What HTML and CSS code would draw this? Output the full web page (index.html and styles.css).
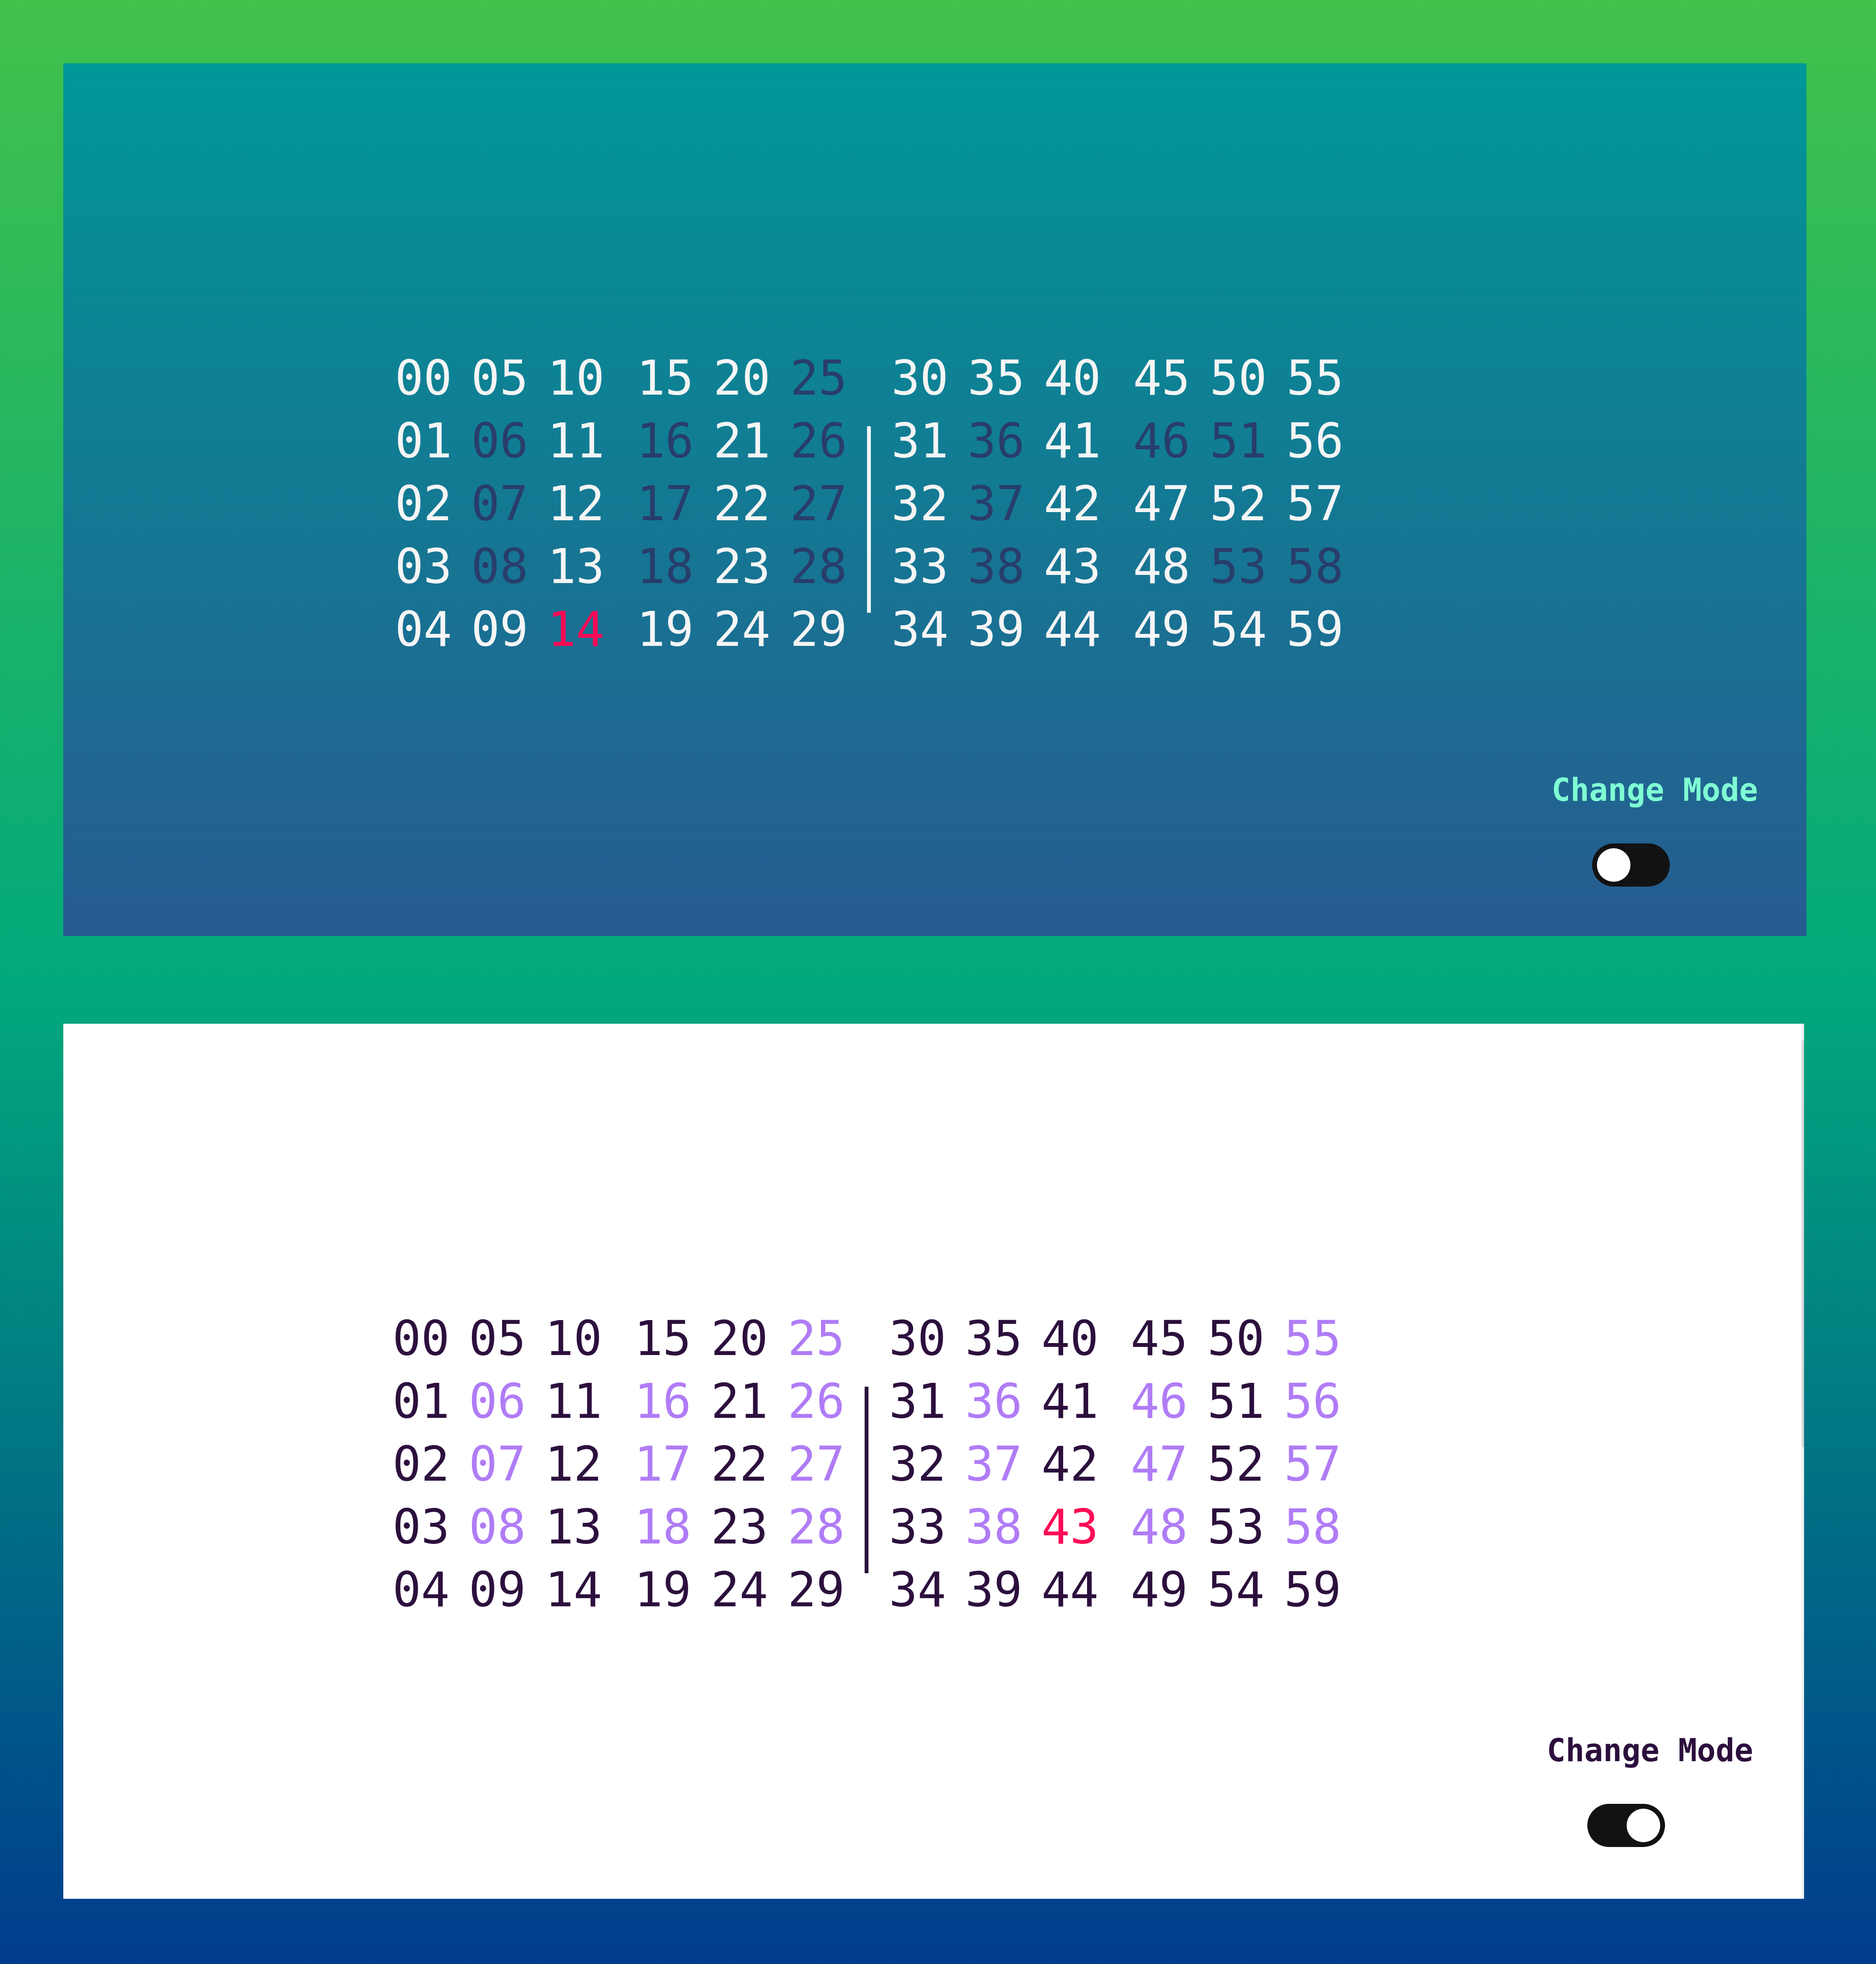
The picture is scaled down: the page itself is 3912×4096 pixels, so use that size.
FILE: index.html
```html
<!DOCTYPE html>
<html lang="en">
<head>
    <meta charset="UTF-8">
    <meta name="viewport" content="width=device-width, initial-scale=1.0">
    <title>Binary Minute Clock</title>
    <link rel="stylesheet" href="styles.css">
</head>
<body>
    <div class="panel dark">
        <div class="clock">
            <div class="half">
                <span class="n">00</span><span class="n">01</span><span class="n">02</span><span class="n">03</span><span class="n">04</span>
                <span class="n">05</span><span class="n dim">06</span><span class="n dim">07</span><span class="n dim">08</span><span class="n">09</span>
                <span class="n">10</span><span class="n">11</span><span class="n">12</span><span class="n">13</span><span class="n hot">14</span>
                <span class="n">15</span><span class="n dim">16</span><span class="n dim">17</span><span class="n dim">18</span><span class="n">19</span>
                <span class="n">20</span><span class="n">21</span><span class="n">22</span><span class="n">23</span><span class="n">24</span>
                <span class="n dim">25</span><span class="n dim">26</span><span class="n dim">27</span><span class="n dim">28</span><span class="n">29</span>
            </div>
            <div class="divider"></div>
            <div class="half">
                <span class="n">30</span><span class="n">31</span><span class="n">32</span><span class="n">33</span><span class="n">34</span>
                <span class="n">35</span><span class="n dim">36</span><span class="n dim">37</span><span class="n dim">38</span><span class="n">39</span>
                <span class="n">40</span><span class="n">41</span><span class="n">42</span><span class="n">43</span><span class="n">44</span>
                <span class="n">45</span><span class="n dim">46</span><span class="n">47</span><span class="n">48</span><span class="n">49</span>
                <span class="n">50</span><span class="n dim">51</span><span class="n">52</span><span class="n dim">53</span><span class="n">54</span>
                <span class="n">55</span><span class="n">56</span><span class="n">57</span><span class="n dim">58</span><span class="n">59</span>
            </div>
        </div>
        <div class="mode">
            <span class="mode-label">Change Mode</span>
            <label class="switch"><input type="checkbox"><span class="knob"></span></label>
        </div>
    </div>

    <div class="panel light">
        <div class="clock">
            <div class="half">
                <span class="n">00</span><span class="n">01</span><span class="n">02</span><span class="n">03</span><span class="n">04</span>
                <span class="n">05</span><span class="n dim">06</span><span class="n dim">07</span><span class="n dim">08</span><span class="n">09</span>
                <span class="n">10</span><span class="n">11</span><span class="n">12</span><span class="n">13</span><span class="n">14</span>
                <span class="n">15</span><span class="n dim">16</span><span class="n dim">17</span><span class="n dim">18</span><span class="n">19</span>
                <span class="n">20</span><span class="n">21</span><span class="n">22</span><span class="n">23</span><span class="n">24</span>
                <span class="n dim">25</span><span class="n dim">26</span><span class="n dim">27</span><span class="n dim">28</span><span class="n">29</span>
            </div>
            <div class="divider"></div>
            <div class="half">
                <span class="n">30</span><span class="n">31</span><span class="n">32</span><span class="n">33</span><span class="n">34</span>
                <span class="n">35</span><span class="n dim">36</span><span class="n dim">37</span><span class="n dim">38</span><span class="n">39</span>
                <span class="n">40</span><span class="n">41</span><span class="n">42</span><span class="n hot">43</span><span class="n">44</span>
                <span class="n">45</span><span class="n dim">46</span><span class="n dim">47</span><span class="n dim">48</span><span class="n">49</span>
                <span class="n">50</span><span class="n">51</span><span class="n">52</span><span class="n">53</span><span class="n">54</span>
                <span class="n dim">55</span><span class="n dim">56</span><span class="n dim">57</span><span class="n dim">58</span><span class="n">59</span>
            </div>
        </div>
        <div class="mode">
            <span class="mode-label">Change Mode</span>
            <label class="switch on"><input type="checkbox" checked><span class="knob"></span></label>
        </div>
    </div>
</body>
</html>
```

FILE: styles.css
```css
html {
    min-height: 100%;
    background: linear-gradient(#42c14b, #02a97c, #003c8d);
}
body {
    margin: 0;
    padding: 132px 0 0;
    font-family: "DejaVu Sans Mono", "Liberation Mono", monospace;
}
.panel {
    box-sizing: border-box;
    width: 3635px;
    height: 1820px;
    margin-left: 132px;
    padding-top: 591px;
    display: flex;
    flex-direction: column;
}
.dark {
    background: linear-gradient(#009797, #275b90);
    color: #f5f5f5;
}
.light {
    position: relative;
    width: 3630px;
    height: 1825px;
    margin-top: 183px;
    background: #ffffff;
    border-right: 5px solid #eef0f1;
    color: #2c0f3d;
}
/* scrollbar thumb */
.light::after {
    content: "";
    position: absolute;
    top: 35px;
    right: -5px;
    width: 5px;
    height: 848px;
    background: #d4d6d8;
}
.clock {
    display: flex;
    width: 2252px;
    margin: 0 auto;
}
.half {
    display: grid;
    grid-template-columns: 159px 159px 186px 160px 160px auto;
    grid-template-rows: repeat(5, 131px);
    grid-auto-flow: column;
}
.n {
    font-size: 99px;
    line-height: 131px;
}
.dark .dim {
    color: #283d6b;
}
.light .dim {
    color: #b07cf6;
}
.hot {
    color: #ff0a56;
}
.divider {
    align-self: flex-start;
    width: 8px;
    height: 389px;
    margin: 166px 43px 0 41px;
    background: currentColor;
}
.mode {
    align-self: flex-end;
    display: flex;
    flex-direction: column;
    align-items: flex-start;
    margin: 239px 101px 0 0;
}
.mode-label {
    font-size: 65px;
    font-weight: bold;
    line-height: 62px;
}
.dark .mode-label {
    color: aquamarine;
}
.switch {
    box-sizing: border-box;
    display: flex;
    align-items: center;
    width: 162px;
    height: 90px;
    margin: 80px 0 0 84px;
    padding: 0 10px;
    border-radius: 45px;
    background: #121212;
    cursor: pointer;
}
.switch input {
    display: none;
}
.switch.on {
    justify-content: flex-end;
}
.knob {
    width: 70px;
    height: 70px;
    border-radius: 50%;
    background: #ffffff;
}
```
